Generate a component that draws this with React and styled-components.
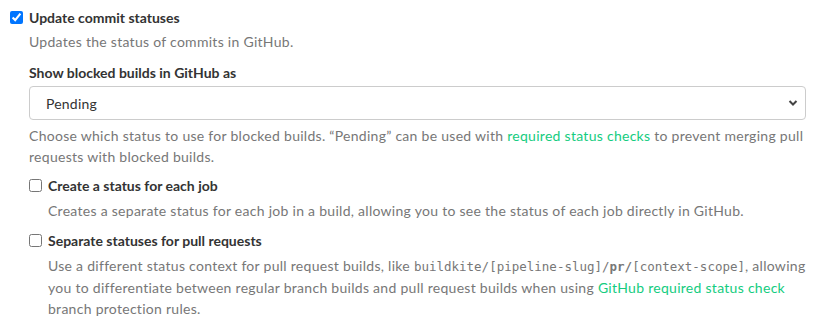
import React from "react";
import styled, { createGlobalStyle } from "styled-components";

const Global = createGlobalStyle`
  html, body { margin: 0; padding: 0; background: #fff; }
  body { font-family: "Segoe UI", Lato, sans-serif; font-size: 14px; color: #333; }
  * { box-sizing: border-box; }
`;

const Page = styled.div`
  padding: 7px 7px 0 10px;
  width: 813px;
`;

const CheckRow = styled.label`
  display: flex;
  align-items: center;
  gap: 6px;
  font-weight: 700;
  line-height: 21px;
  color: #333;
  margin-top: ${(p) => p.$top || 0}px;
  cursor: pointer;
`;

const Box = styled.input.attrs({ type: "checkbox" })`
  margin: 0;
  width: 13px;
  height: 13px;
  accent-color: #0075ff;
`;

const Nested = styled.div`
  padding-left: 19px;
`;

const Hint = styled.p`
  margin: ${(p) => p.$top || 0}px 0 0 0;
  color: #777;
  line-height: 21px;
  letter-spacing: 0.28px;
  padding-left: ${(p) => (p.$indent ? 19 : 0)}px;
`;

const FieldLabel = styled.div`
  font-weight: 700;
  line-height: 21px;
  margin-top: 10px;
  color: #333;
`;

const SelectWrap = styled.div`
  position: relative;
  margin-top: 3px;
  width: 777px;
`;

const Select = styled.select`
  appearance: none;
  width: 100%;
  height: 34px;
  border: 1px solid #ccc;
  border-radius: 4px;
  background: #fff;
  padding: 0 16px;
  font: inherit;
  letter-spacing: 0.2px;
  color: #333;
`;

const Chevron = styled.svg`
  position: absolute;
  right: 8px;
  top: 13px;
  pointer-events: none;
`;

const Link = styled.a`
  color: #14cc80;
  text-decoration: none;
`;

const Code = styled.code`
  font-family: "DejaVu Sans Mono", "Liberation Mono", monospace;
  font-size: 12.5px;
  letter-spacing: 0;
  color: #777;
`;

export default function App() {
  return (
    <>
      <Global />
      <Page>
        <CheckRow>
          <Box defaultChecked />
          Update commit statuses
        </CheckRow>
        <Nested>
          <Hint $top={3}>Updates the status of commits in GitHub.</Hint>
          <FieldLabel>Show blocked builds in GitHub as</FieldLabel>
          <SelectWrap>
            <Select defaultValue="pending">
              <option value="pending">Pending</option>
              <option value="failure">Failure</option>
            </Select>
            <Chevron width="10" height="8" viewBox="0 0 10 8">
              <path d="M1.5 2 L5 5.5 L8.5 2" fill="none" stroke="#444" strokeWidth="2" />
            </Chevron>
          </SelectWrap>
          <Hint $top={5}>
            Choose which status to use for blocked builds. “Pending” can be used with{" "}
            <Link href="#">required status checks</Link> to prevent merging pull requests with
            blocked builds.
          </Hint>
          <CheckRow $top={8}>
            <Box />
            Create a status for each job
          </CheckRow>
          <Hint $indent $top={4}>
            Creates a separate status for each job in a build, allowing you to see the status of
            each job directly in GitHub.
          </Hint>
          <CheckRow $top={9}>
            <Box />
            Separate statuses for pull requests
          </CheckRow>
          <Hint $indent $top={4}>
            Use a different status context for pull request builds, like{" "}
            <Code>
              buildkite/[pipeline-slug]/<b>pr/</b>[context-scope]
            </Code>
            , allowing you to differentiate between regular branch builds and pull request builds
            when using <Link href="#">GitHub required status check</Link> branch protection rules.
          </Hint>
        </Nested>
      </Page>
    </>
  );
}
